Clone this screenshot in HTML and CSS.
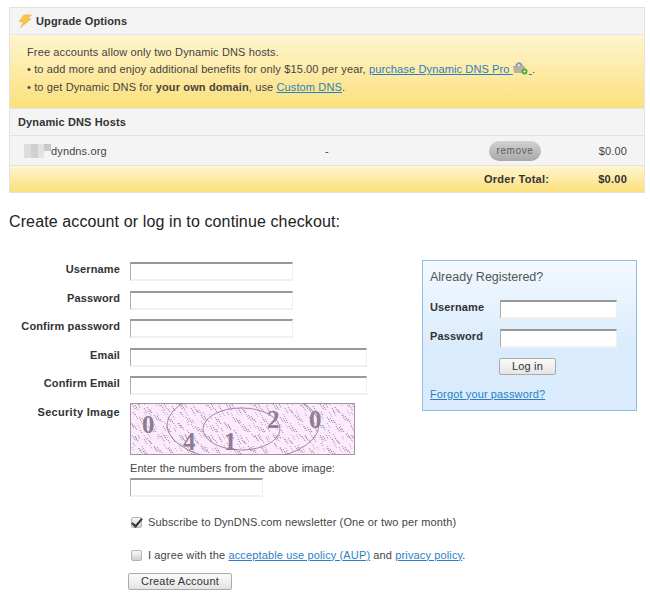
FILE: index.html
```html
<!DOCTYPE html>
<html lang="en">
<head>
<meta charset="utf-8">
<title>Checkout</title>
<link rel="stylesheet" href="styles.css">
</head>
<body>
<section class="cart">
  <h2 class="cart-head">
    <svg class="bolt" width="14" height="14" viewBox="0 0 14 14"><path d="M6 1 L13.5 1 L9.5 4.5 L13 5 L2.5 13.5 L5.5 8 L1 7.5 Z" fill="#f7c843" stroke="#e8ad33" stroke-width=".6"/></svg>
    Upgrade Options
  </h2>
  <div class="notice">
    <p>Free accounts allow only two Dynamic DNS hosts.</p>
    <p>• to add more and enjoy additional benefits for only $15.00 per year, <a href="#">purchase Dynamic DNS Pro <svg class="basket" width="17" height="14" viewBox="0 0 17 14"><path d="M1 5 H13 L12 12 H2 Z" fill="#b9b29c"/><path d="M4 5 Q7 -1 10 5" fill="none" stroke="#6f9cc4" stroke-width="2"/><circle cx="12.5" cy="10.5" r="3" fill="#5aa83c"/><circle cx="12.5" cy="10.5" r="1" fill="#fff"/></svg> </a>.</p>
    <p>• to get Dynamic DNS for <b>your own domain</b>, use <a href="#">Custom DNS</a>.</p>
  </div>
  <h3 class="hosts-head">Dynamic DNS Hosts</h3>
  <div class="host-row">
    <span class="host-name"><span class="blur" aria-hidden="true"><i></i><i></i><i></i><i></i></span>dyndns.org</span>
    <span class="dash">-</span>
    <span class="remove">remove</span>
    <span class="price">$0.00</span>
  </div>
  <div class="total-row">
    <span class="total-label">Order Total:</span>
    <span class="price">$0.00</span>
  </div>
</section>

<h1 class="title">Create account or log in to continue checkout:</h1>

<div class="columns">
  <form class="signup">
    <div class="row"><label>Username</label><input class="short" type="text"></div>
    <div class="row"><label>Password</label><input class="short" type="password"></div>
    <div class="row"><label>Confirm password</label><input class="short" type="password"></div>
    <div class="row"><label>Email</label><input class="long" type="text"></div>
    <div class="row"><label>Confirm Email</label><input class="long" type="text"></div>
    <div class="row captcha-row">
      <label>Security Image</label>
      <div class="captcha-col">
        <svg class="captcha" width="225" height="52" viewBox="0 0 225 52">
          <defs>
            <pattern id="rain" width="47" height="31" patternUnits="userSpaceOnUse">
              <path d="M2 1l4 6M5 2l3 5M8 1l2 4M3 9l2 3M14 5l3 5M17 4l4 6M20 7l2 3M28 0l3 4M31 2l4 6M34 1l3 5M38 6l2 3M42 3l3 5M9 14l3 5M12 15l3 5M15 17l2 3M24 12l4 6M27 13l3 5M30 16l2 3M38 14l3 5M41 16l3 5M1 20l3 5M4 22l3 5M18 23l4 6M21 24l3 5M24 26l2 3M33 23l3 5M36 24l4 6M39 26l2 3M44 25l2 4M10 27l2 3" stroke="#75627c" stroke-width=".7" stroke-dasharray="1.500 .9" fill="none"/>
            </pattern>
            <pattern id="rain2" x="11" y="7" width="37" height="23" patternUnits="userSpaceOnUse">
              <path d="M3 2l3 5M7 1l3 5M16 3l2 4M21 0l3 5M25 2l2 3M31 4l3 5M1 13l3 5M9 12l2 4M13 14l3 5M23 11l3 5M28 14l2 4M34 15l2 3" stroke="#8a7890" stroke-width=".6" stroke-dasharray="1.200 1" fill="none"/>
            </pattern>
          </defs>
          <rect x=".5" y=".5" width="224" height="51" fill="#fcebfc" stroke="#a491a8"/>
          <rect x="1" y="1" width="223" height="50" fill="url(#rain)"/>
          <rect x="1" y="1" width="223" height="50" fill="url(#rain2)"/>
          <ellipse cx="113" cy="22" rx="76" ry="36" fill="none" stroke="#85738c" stroke-width=".8"/>
          <ellipse cx="111.500" cy="26" rx="38.500" ry="21" fill="none" stroke="#85738c" stroke-width=".8"/>
          <g class="digits">
            <text x="12" y="30">0</text>
            <text x="53" y="46.500">4</text>
            <text x="94" y="46.500">1</text>
            <text x="137" y="25">2</text>
            <text x="179" y="25">0</text>
          </g>
        </svg>
        <div class="captcha-hint">Enter the numbers from the above image:</div>
        <input class="code" type="text">
      </div>
    </div>
    <div class="check-row first"><input type="checkbox" checked><span>Subscribe to DynDNS.com newsletter (One or two per month)</span></div>
    <div class="check-row second"><input type="checkbox"><span>I agree with the <a href="#">acceptable use policy (AUP)</a> and <a href="#">privacy policy</a>.</span></div>
    <button class="btn create" type="button">Create Account</button>
  </form>

  <aside class="login">
    <div class="login-title">Already Registered?</div>
    <div class="login-row"><label>Username</label><input type="text"></div>
    <div class="login-row"><label>Password</label><input type="password"></div>
    <button class="btn login-btn" type="button">Log in</button>
    <a class="forgot" href="#">Forgot your password?</a>
  </aside>
</div>
</body>
</html>
```

FILE: styles.css
```css
* { box-sizing: border-box; }
html, body { margin: 0; padding: 0; }
body {
  width: 650px;
  height: 595px;
  overflow: hidden;
  background: #fff;
  font-family: "Liberation Sans", Arial, sans-serif;
  font-size: 11px;
  color: #444;
  letter-spacing: .13px;
}
a { color: #2a7fc4; text-decoration: underline; }

.cart {
  margin: 7px 5px 0 9px;
  border: 1px solid #e2e2e2;
  width: 636px;
  background: #f4f4f4;
}
.cart-head, .hosts-head {
  margin: 0;
  font-size: 11px;
  font-weight: bold;
  color: #333;
  display: flex;
  align-items: center;
  background: #f4f4f4;
}
.cart-head { height: 26px; padding-left: 8px; gap: 4px; }
.hosts-head { height: 27px; padding-left: 8px; border-bottom: 1px solid #e2e2e2; }
.bolt { flex: none; }
.notice {
  height: 75px;
  padding: 9px 0 0 17px;
  background: linear-gradient(#fff5cf, #fbe07c);
  border-top: 1px solid #e6e6e6;
  border-bottom: 1px solid #e6e6e6;
}
.notice p { margin: 0; line-height: 17.3px; }
.basket { vertical-align: -2px; margin-left: -1px; }
.host-row {
  height: 30px;
  display: flex;
  align-items: center;
  border-bottom: 1px solid #e2e2e2;
  position: relative;
}
.host-name { display: flex; align-items: center; margin-left: 14px; width: 301px; }
.blur { display: flex; width: 27px; height: 14px; filter: blur(.7px); }
.blur i { flex: 1; background: #ddd; }
.blur i:nth-child(2) { background: #d0d0d0; }
.blur i:nth-child(3) { background: #e2e2e2; }
.blur i:nth-child(4) { background: #c8c8c8; height: 7px; }
.dash { width: 164px; }
.remove {
  width: 52px;
  height: 20px;
  border-radius: 10px;
  background: linear-gradient(#d2d2d2, #a8a8a8);
  text-align: center;
  line-height: 19px;
  font-size: 10px;
  color: #5c5c5c;
  letter-spacing: .6px;
}
.price { position: absolute; right: 17px; }
.total-row {
  height: 26px;
  position: relative;
  background: linear-gradient(#fff5cf, #fbe07c);
  display: flex;
  align-items: center;
  font-weight: bold;
  color: #333;
  letter-spacing: .25px;
}
.total-label { margin-left: 474px; }

.title {
  margin: 19px 0 0 9px;
  font-size: 16px;
  font-weight: normal;
  color: #222;
  line-height: 20px;
  letter-spacing: .12px;
}

.columns { display: flex; margin-top: 30px; }
.signup { width: 422px; flex: none; }
.row { display: flex; height: 28.5px; }
.row label, .login-row label { font-weight: bold; color: #333; }
.row label { width: 120px; text-align: right; margin-right: 10px; line-height: 14px; }
input[type="text"], input[type="password"] {
  height: 19px;
  padding: 0;
  margin: 0;
  border: 2px solid #f0f0f0;
  border-top-color: #999;
  border-left-color: #aaa;
  border-left-width: 1px;
  border-right-width: 1px;
  background: #fff;
  display: block;
}
.short { width: 163px; }
.long { width: 237px; }
.captcha-row { height: auto; margin-top: -2px; }
.captcha-row label { padding-top: 2px; letter-spacing: .3px; }
.captcha-col { display: flex; flex-direction: column; }
.captcha { display: block; }
.digits text { font-family: "Liberation Serif", serif; font-weight: bold; font-size: 25px; fill: #8f7c92; }
.captcha-hint { margin-top: 6px; line-height: 14px; letter-spacing: .05px; }
.code { width: 133px; margin-top: 3px !important; }
.check-row { display: flex; align-items: center; margin-left: 130px; height: 16px; white-space: nowrap; }
.check-row input {
  appearance: none;
  position: relative;
  flex: none;
  width: 11px;
  height: 11px;
  margin: 2px 6px 0 1px;
  border: 1px solid #b5b5b5;
  border-radius: 2px;
  background: linear-gradient(#fafafa, #d0d0d0);
}
.check-row input:checked::after {
  content: "";
  position: absolute;
  left: 2px;
  top: -2px;
  width: 4px;
  height: 9px;
  border: solid #333;
  border-width: 0 2px 2px 0;
  transform: rotate(40deg);
}
.check-row.first { margin-top: 17px; }
.check-row.second { margin-top: 17px; }
.btn {
  display: block;
  font-family: inherit;
  font-size: 11px;
  color: #333;
  letter-spacing: .2px;
  padding: 0;
  height: 17px;
  border: 1px solid #aaa;
  border-radius: 2px;
  background: linear-gradient(#fafafa, #e4e4e4);
}
.create { width: 104px; margin: 10px 0 0 128px; }

.login {
  width: 215px;
  height: 151px;
  margin-top: -2px;
  border: 1px solid #8fc0e4;
  background: linear-gradient(#f3f9ff, #d9ebfc 60%);
  padding: 8px 7px 0;
}
.login-title { font-size: 12.5px; line-height: 16px; color: #555; letter-spacing: 0; }
.login-row { display: flex; margin-top: 15px; height: 20px; }
.login-row + .login-row { margin-top: 8.5px; }
.login-row label { width: 70px; flex: none; line-height: 14px; }
.login-row input { width: 117px; }
.login-btn { width: 57px; margin: 9px 0 0 69px; }
.forgot { display: block; margin-top: 12px; line-height: 14px; }
```
